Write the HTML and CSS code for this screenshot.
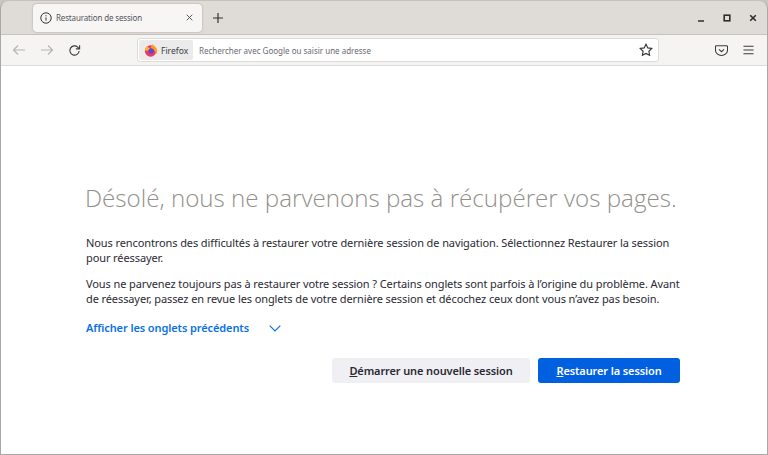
FILE: index.html
```html
<!DOCTYPE html>
<html lang="fr">
<head>
    <meta charset="UTF-8">
    <title>Restauration de session</title>
    <link rel="stylesheet" href="styles.css">
</head>
<body>
    <div class="window">
        <div class="tabbar">
            <div class="tab">
                <svg class="tab-icon" viewBox="0 0 12 12"><circle cx="6" cy="6" r="5.2"/><path d="M6 5.4v3.2M6 3.2v1.1"/></svg>
                <span class="tab-title">Restauration de session</span>
                <svg class="tab-close" viewBox="0 0 8 8"><path d="M.8.8l6.4 6.4M7.2.8L.8 7.2"/></svg>
            </div>
            <svg class="new-tab" viewBox="0 0 10 10"><path d="M5 0v10M0 5h10"/></svg>
            <div class="win-controls">
                <svg class="win-btn" viewBox="0 0 8 8"><path d="M1 7h6"/></svg>
                <svg class="win-btn" viewBox="0 0 8 8"><rect x="1.2" y="1.2" width="5.6" height="5.6"/></svg>
                <svg class="win-btn" viewBox="0 0 8 8"><path d="M1.2 1.2l5.6 5.6M6.8 1.2L1.2 6.8"/></svg>
            </div>
        </div>
        <div class="navbar">
            <svg class="nav-icon dim" viewBox="0 0 14 12"><path d="M13 6H1.5M6 1.5L1.5 6 6 10.5"/></svg>
            <svg class="nav-icon dim" viewBox="0 0 14 12"><path d="M1 6h11.5M8 1.5L12.5 6 8 10.5"/></svg>
            <svg class="nav-icon reload" viewBox="0 0 14 14"><path d="M12 7.500A5 5 0 1 1 10.400 3.300L12.200 5"/><path d="M12.500 1.300v4h-4"/></svg>
            <div class="urlbar">
                <div class="identity">
                    <svg class="fx-logo" viewBox="0 0 16 16">
                        <circle cx="7.500" cy="9.200" r="6.500" fill="#e8396b"/>
                        <path d="M9.500 .5c.6 2.200 4.800 3.200 5.600 7.900.3 2-.4 3.600-1.500 4.600 0-3-1.600-5-4-5.600-1.600-.4-2.200-1.800-1.400-3 1-1.300 2-2.300 1.300-3.900z" fill="#ff9a27"/>
                        <path d="M1 8.800c-.3-2.200 .9-4 2.500-5 .6 1.300 1.800 1.900 3.700 1.900L5 8.500z" fill="#ffb32c"/>
                        <circle cx="8.200" cy="9" r="3" fill="#5b47d6"/>
                    </svg>
                    <span>Firefox</span>
                </div>
                <span class="placeholder">Rechercher avec Google ou saisir une adresse</span>
                <svg class="star" viewBox="0 0 14 14"><path d="M7 1.200l1.800 3.700 4 .6-2.900 2.800.7 4L7 10.400 3.400 12.300l.7-4L1.200 5.500l4-.6z"/></svg>
            </div>
            <svg class="nav-icon pocket" viewBox="0 0 14 14"><path d="M1.500 2h11c.5 0 1 .4 1 1v3.500a6.500 6 0 0 1-13 0V3c0-.6.500-1 1-1z"/><path d="M4.300 5.700L7 8.300l2.700-2.600"/></svg>
            <svg class="nav-icon menu" viewBox="0 0 12 10"><path d="M.5 1h11M.5 5h11M.5 9h11"/></svg>
        </div>
        <main class="page">
            <h1>Désolé, nous ne parvenons pas à récupérer vos pages.</h1>
            <p>Nous rencontrons des difficultés à restaurer votre dernière session de navigation. Sélectionnez Restaurer la session pour réessayer.</p>
            <p>Vous ne parvenez toujours pas à restaurer votre session ? Certains onglets sont parfois à l’origine du problème. Avant de réessayer, passez en revue les onglets de votre dernière session et décochez ceux dont vous n’avez pas besoin.</p>
            <div class="show-tabs">
                <a class="show-link">Afficher les onglets précédents</a>
                <svg class="chevron" viewBox="0 0 12 7"><path d="M.7.7L6 6l5.300-5.300"/></svg>
            </div>
            <div class="actions">
                <button class="btn"><u>D</u>émarrer une nouvelle session</button>
                <button class="btn primary"><u>R</u>estaurer la session</button>
            </div>
        </main>
    </div>
</body>
</html>
```

FILE: styles.css
```css
* { box-sizing: border-box; margin: 0; padding: 0; }
html, body { height: 100%; }
body { font-family: "Noto Sans", sans-serif; background: #c9c6c2; overflow: hidden; }
svg { fill: none; stroke: currentColor; flex: none; }

.window { height: 455px; display: flex; flex-direction: column; border: 1px solid #a8a8a8; border-top-color: #c4c0bb; border-radius: 9px 9px 0 0; overflow: hidden; }

.tabbar { height: 34px; flex: none; display: flex; align-items: center; background: #dfdbd6; border-bottom: 1px solid #c6c3be; padding-left: 32px; }
.tab { width: 169px; height: 28px; display: flex; align-items: center; padding: 0 8px 0 7px; background: #f7f6f5; border-radius: 4px; box-shadow: 0 0 2px rgba(0, 0, 0, 0.3); }
.tab-icon { width: 12px; height: 12px; stroke-width: 1; stroke: #333; }
.tab-title { font-size: 8px; margin-left: 4px; flex: 1; white-space: nowrap; letter-spacing: -0.15px; color: #55555a; }
.tab-close { width: 7px; height: 7px; stroke-width: 1; color: #444; margin-right: 1px; }
.new-tab { width: 10px; height: 10px; margin-left: 11px; stroke-width: 1.2; color: #333; }
.win-controls { margin-left: auto; display: flex; gap: 16px; padding-right: 9px; }
.win-btn { width: 8px; height: 8px; margin: 0 1px; stroke-width: 1.6; color: #2e2e2e; }

.navbar { height: 31px; flex: none; display: flex; align-items: center; background: #f5f4f3; border-bottom: 1px solid #dcdbd9; padding-left: 11px; color: #3a3a3c; }
.nav-icon { width: 14px; height: 14px; stroke-width: 1.1; }
.nav-icon.dim { color: #b3b3b5; margin-right: 14px; }
.nav-icon.reload { width: 13px; height: 13px; stroke-width: 1.2; }
.urlbar { width: 522px; height: 24px; margin-left: 56px; display: flex; align-items: center; background: #fff; border: 1px solid #dcdbd9; border-radius: 3px; padding: 1px; }
.identity { height: 20px; width: 54px; display: flex; align-items: center; gap: 3px; padding-left: 5px; background: #ebebeb; border-radius: 2px; font-size: 8.5px; color: #3c3c40; }
.fx-logo { width: 14px; height: 14px; stroke: none; }
.placeholder { font-size: 8px; color: #6a6a70; margin-left: 6px; flex: 1; white-space: nowrap; }
.star { width: 14px; height: 14px; stroke-width: 1.1; margin-right: 4px; color: #333; }
.pocket { margin-left: 56px; width: 13px; height: 13px; }
.menu { margin-left: 15px; width: 11px; height: 10px; }

.page { flex: 1; background: #fff; padding: 116px 87px 0 85px; color: #2b2a33; }
h1 { font-family: "Open Sans", sans-serif; font-weight: 300; font-size: 24.15px; line-height: 32px; color: #93908c; white-space: nowrap; margin: 0 0 21px -1px; }
p { font-size: 11px; line-height: 15px; margin-bottom: 11px; letter-spacing: -0.1px; }
.show-tabs { display: flex; align-items: center; margin-top: 14px; }
.show-link { font-size: 11px; font-weight: 600; letter-spacing: -0.1px; color: #0a70e8; line-height: 16px; }
.chevron { width: 12px; height: 7px; margin-left: 20px; stroke-width: 1.2; color: #0a70e8; }
.actions { display: flex; justify-content: flex-end; gap: 8px; margin-top: 22px; }
.btn { height: 25px; border: none; border-radius: 3px; font-family: inherit; font-size: 11px; font-weight: 600; letter-spacing: -0.12px; background: #f0f0f4; color: #2b2a33; width: 198px; }
.btn.primary { background: #0060df; color: #fff; width: 142px; }
```
